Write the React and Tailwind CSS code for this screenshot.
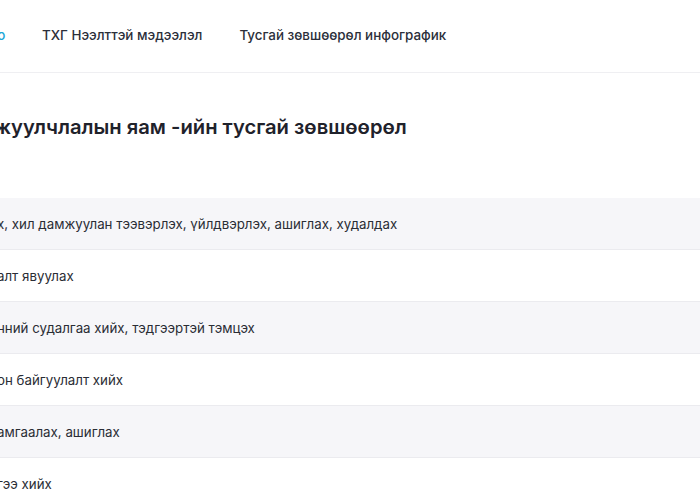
const navItems = [
  { label: 'Танилцуулга видео', active: true },
  { label: 'ТХГ Нээлттэй мэдээлэл' },
  { label: 'Тусгай зөвшөөрөл инфографик' },
]

const rows = [
  'х, хил дамжуулан тээвэрлэх, үйлдвэрлэх, ашиглах, худалдах',
  'алт явуулах',
  'нний судалгаа хийх, тэдгээртэй тэмцэх',
  'он байгуулалт хийх',
  'амгаалах, ашиглах',
  'гээ хийх',
]

export default function App() {
  return (
    <div className="h-[500px] w-[700px] overflow-hidden bg-white font-['Inter',sans-serif] text-[#2b2f3a]">
      <header className="flex h-[73px] items-center border-b border-[#efeff2] pb-[2px]">
        <nav className="-ml-[122px] flex items-center gap-[37px] whitespace-nowrap text-[13.4px] font-medium">
          {navItems.map((item) => (
            <a
              key={item.label}
              href="#"
              className={item.active ? 'w-[127px] text-right text-[#1ba6d6]' : 'text-[#2b2f3a]'}
            >
              {item.label}
            </a>
          ))}
        </nav>
      </header>

      <h1 className="-ml-[6px] mt-[40px] whitespace-nowrap text-[20.2px] font-semibold leading-[28px] text-[#1f222b]">
        жуулчлалын яам -ийн тусгай зөвшөөрөл
      </h1>

      <ul className="mt-[57px]">
        {rows.map((text, i) => (
          <li
            key={i}
            className={`flex h-[52px] items-center border-b border-[#ebebef] pt-[2px] whitespace-nowrap text-[13.3px] text-[#2a2d35] ${
              i % 2 === 0 ? 'bg-[#f6f6f9]' : 'bg-white'
            }`}
          >
            <span className="-ml-[3px]">{text}</span>
          </li>
        ))}
      </ul>
    </div>
  )
}
